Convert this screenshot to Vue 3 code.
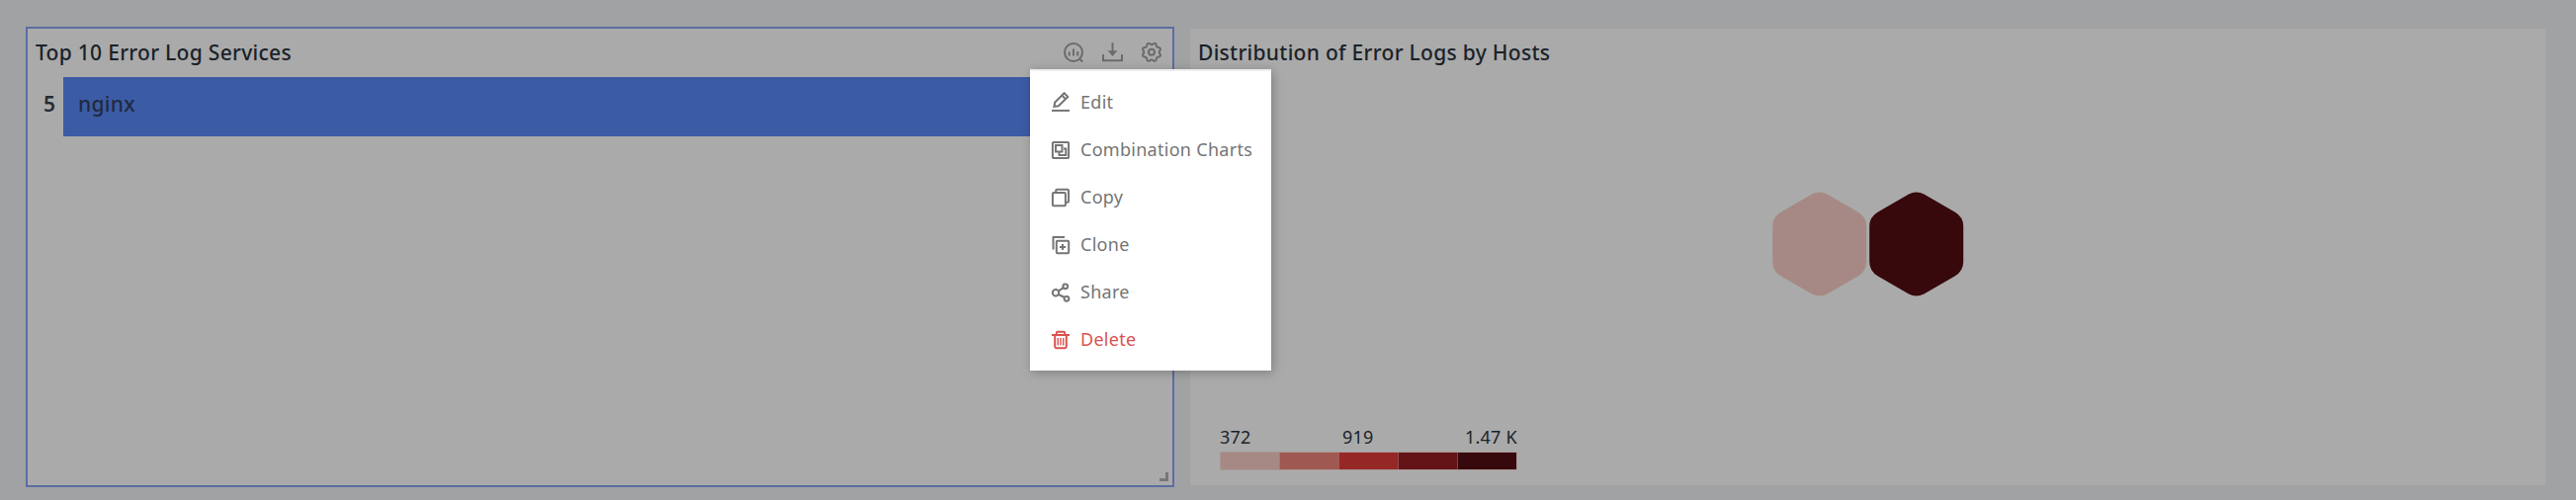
<script setup>
const legend = ['#a68984', '#a05852', '#962727', '#641417', '#37080c']
const items = [
  { id: 'edit', label: 'Edit' },
  { id: 'combine', label: 'Combination Charts' },
  { id: 'copy', label: 'Copy' },
  { id: 'clone', label: 'Clone' },
  { id: 'share', label: 'Share' },
  { id: 'delete', label: 'Delete' },
]

// Outline of an eight-lobed cog with rounded teeth
const cog = 'M' + Array.from({ length: 96 }, (_, i) => {
  const t = (i / 96) * Math.PI * 2
  const r = 8.6 - 0.95 * Math.cos(8 * t)
  return (10 + r * Math.cos(t)).toFixed(2) + ' ' + (9.8 + r * Math.sin(t)).toFixed(2)
}).join('L') + 'Z'
</script>

<template>
  <main class="board">
    <section class="panel active">
      <header class="head">
        <h2 class="title">Top 10 Error Log Services</h2>
        <div class="tools">
          <svg width="20" height="21" viewBox="0 0 20 21">
            <circle cx="10" cy="10" r="9" />
            <path d="M5.800 9.500v4M10 6.500v7M14.200 9v4.500M15.500 16.200l3.800 3.200" />
          </svg>
          <svg width="21" height="21" viewBox="0 0 21 21">
            <path d="M1 12v6.200h19V12M10.500 0.300v9" />
            <path class="solid" d="M5.700 8.300h9.600l-4.800 5.600z" />
          </svg>
          <svg width="21" height="21" viewBox="0 0 21 21">
            <path class="cog" stroke-linejoin="round" :d="cog" />
            <circle cx="10" cy="9.800" r="3" />
          </svg>
        </div>
      </header>
      <div class="row">
        <span class="count">5</span>
        <div class="bar">nginx</div>
      </div>
      <i class="grip"></i>
    </section>

    <section class="panel hosts">
      <header class="head"><h2 class="title">Distribution of Error Logs by Hosts</h2></header>
      <svg class="hexes" width="194" height="106" viewBox="0 0 194 106">
        <defs>
          <path id="hex" d="M40 2.6Q47.7 -1.6 55.4 2.6L86.5 20.5Q95.2 25.5 95.2 35V71Q95.2 80.500 86.5 85.500L55.400 103.400Q47.700 107.600 40 103.400L8.900 85.500Q0.200 80.500 0.200 71V35Q0.200 25.500 8.900 20.500Z" />
        </defs>
        <use href="#hex" fill="#a68984" />
        <use href="#hex" x="98" fill="#37080c" />
      </svg>
      <div class="legend">
        <div class="labels"><span>372</span><span>919</span><span>1.47 K</span></div>
        <div class="scale"><i v-for="c in legend" :key="c" :style="{ background: c }"></i></div>
      </div>
    </section>

    <nav class="menu">
      <div v-for="item in items" :key="item.id" class="item" :class="item.id">
        <svg width="20" height="20" viewBox="0 0 20 20">
          <template v-if="item.id === 'edit'">
            <path d="M1 18.900H19" />
            <path d="M3.400 14.800L4.200 10.600L13.600 1.200L17.300 4.900L7.800 14.300ZM11.500 3.700L14.900 7.100" />
          </template>
          <template v-else-if="item.id === 'combine'">
            <rect x="1.900" y="1.900" width="16.200" height="16.200" rx="1" />
            <path d="M5 5h6.500v6.500H5zM13 8.500h2.300v6.500H8.500v-2.500" />
          </template>
          <template v-else-if="item.id === 'copy'">
            <rect x="1.900" y="5" width="13" height="13.200" rx="1" />
            <path d="M5.200 4.800V2.800Q5.200 1.800 6.200 1.800H17Q18 1.800 18 2.800V13.800Q18 14.800 17 14.800H15" />
          </template>
          <template v-else-if="item.id === 'clone'">
            <rect x="5.800" y="5.800" width="12.400" height="12.400" rx="1" />
            <path d="M2.500 14.500V2H14M12 9v6M9 12h6" />
          </template>
          <template v-else-if="item.id === 'share'">
            <circle cx="5" cy="10.300" r="3.200" />
            <circle cx="14.800" cy="3.800" r="2.400" />
            <circle cx="16" cy="16.300" r="2.400" />
            <path d="M7.700 8.600L12.800 5.200M7.800 12L14 15" />
          </template>
          <template v-else>
            <path d="M1 5H19M5.800 5V3Q5.800 1.800 7 1.800H13Q14.200 1.800 14.200 3V5M4.200 5V16.800Q4.200 18.200 5.600 18.200H14.400Q15.800 18.200 15.800 16.800V5" />
            <path class="fine" d="M7.300 8V15.500M10 8V15.500M12.700 8V15.500" />
          </template>
        </svg>
        <span>{{ item.label }}</span>
      </div>
    </nav>
  </main>
</template>

<style scoped>
.board {
  position: relative;
  box-sizing: border-box;
  width: 2606px;
  height: 506px;
  padding: 27px 31px 12px 26px;
  display: flex;
  gap: 16px;
  overflow: hidden;
  background: #a1a2a4;
  color: #1a2229;
  font-family: "Noto Sans", sans-serif;
}
.panel {
  position: relative;
  box-sizing: border-box;
  background: #aaa;
}
.active {
  width: 1162px;
  height: 466px;
  border: 2px solid #5c6ca3;
}
.hosts {
  flex: 1;
  height: 462px;
  margin-top: 2px;
}
.head {
  display: flex;
  justify-content: space-between;
  align-items: center;
  height: 48px;
  padding: 0 10px 0 8px;
}
.title {
  margin: 0;
  font-size: 21px;
  line-height: 48px;
  font-weight: 500;
  letter-spacing: 0.29px;
  white-space: nowrap;
}
.tools {
  display: flex;
  gap: 19px;
  padding-top: 1px;
  color: #6b6b6b;
}
svg {
  display: block;
  fill: none;
  stroke: currentColor;
  stroke-width: 2;
}
.cog { stroke-width: 2; }
.fine { stroke-width: 1.4; }
.solid {
  fill: currentColor;
  stroke: none;
}
.row {
  display: flex;
  height: 61px;
}
.count {
  box-sizing: border-box;
  width: 36px;
  padding-right: 8px;
  text-align: right;
  font-size: 21px;
  line-height: 56px;
  font-weight: 600;
  color: #252c32;
}
.bar {
  flex: 1;
  box-sizing: border-box;
  height: 60px;
  margin-top: 1px;
  padding-left: 15px;
  background: #3c5ba5;
  color: #1e2b42;
  font-size: 21px;
  line-height: 54px;
  font-weight: 500;
  letter-spacing: 0.28px;
}
.grip {
  position: absolute;
  right: 4px;
  bottom: 4px;
  width: 6px;
  height: 6px;
  border: solid #777;
  border-width: 0 3px 3px 0;
}
.hexes {
  margin: 117px 0 0 589px;
  stroke: none;
}
.legend {
  width: 301px;
  margin: 128px 0 0 30px;
}
.labels {
  display: flex;
  justify-content: space-between;
  height: 29px;
  font-size: 18px;
  line-height: 29px;
  letter-spacing: 0.25px;
}
.scale {
  display: flex;
  height: 19px;
  box-sizing: border-box;
  border: 1px solid rgba(170, 140, 136, 0.6);
}
.scale i { flex: 1; }
.scale i + i { border-left: 1px solid rgba(190, 150, 145, 0.45); background-clip: padding-box; }
.menu {
  position: absolute;
  left: 1042px;
  top: 70px;
  width: 244px;
  height: 305px;
  box-sizing: border-box;
  padding-top: 7px;
  border-top: 2px solid #eee;
  background: #fff;
  box-shadow: 2px 2px 10px rgba(0, 0, 0, 0.25);
}
.item {
  display: flex;
  align-items: center;
  gap: 10px;
  height: 48px;
  padding-left: 21px;
  color: #757575;
  font-size: 18px;
  letter-spacing: 0.28px;
  white-space: nowrap;
}
.item svg { margin-top: 2px; }
.item.edit svg { margin-top: 0; }
.delete { color: #d9534f; }
</style>
